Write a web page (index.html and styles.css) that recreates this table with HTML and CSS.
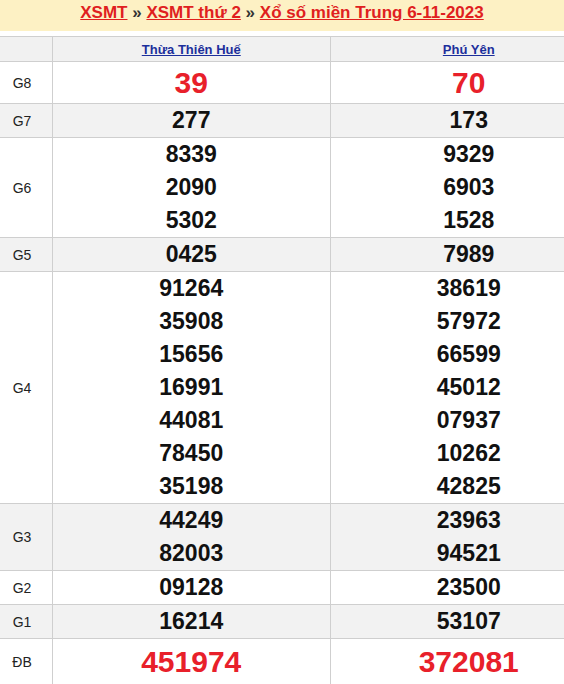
FILE: index.html
```html
<!DOCTYPE html>
<html lang="vi">
<head>
<meta charset="utf-8">
<link rel="stylesheet" href="styles.css">
</head>
<body>
<div class="page">
  <h2 class="title">
    <a href="#">XSMT</a> » <a href="#">XSMT thứ 2</a> » <a href="#">Xổ số miền Trung 6-11-2023</a>
  </h2>
  <table class="kq">
    <thead>
      <tr class="head">
        <th class="lbl"></th>
        <th><a href="#">Thừa Thiên Huế</a></th>
        <th><a href="#">Phú Yên</a></th>
      </tr>
    </thead>
    <tbody>
      <tr class="g8">
        <td class="lbl">G8</td>
        <td><div class="n red big">39</div></td>
        <td><div class="n red big">70</div></td>
      </tr>
      <tr class="alt">
        <td class="lbl">G7</td>
        <td><div class="n">277</div></td>
        <td><div class="n">173</div></td>
      </tr>
      <tr>
        <td class="lbl">G6</td>
        <td><div class="n">8339</div><div class="n">2090</div><div class="n">5302</div></td>
        <td><div class="n">9329</div><div class="n">6903</div><div class="n">1528</div></td>
      </tr>
      <tr class="alt">
        <td class="lbl">G5</td>
        <td><div class="n">0425</div></td>
        <td><div class="n">7989</div></td>
      </tr>
      <tr>
        <td class="lbl">G4</td>
        <td><div class="n">91264</div><div class="n">35908</div><div class="n">15656</div><div class="n">16991</div><div class="n">44081</div><div class="n">78450</div><div class="n">35198</div></td>
        <td><div class="n">38619</div><div class="n">57972</div><div class="n">66599</div><div class="n">45012</div><div class="n">07937</div><div class="n">10262</div><div class="n">42825</div></td>
      </tr>
      <tr class="alt">
        <td class="lbl">G3</td>
        <td><div class="n">44249</div><div class="n">82003</div></td>
        <td><div class="n">23963</div><div class="n">94521</div></td>
      </tr>
      <tr>
        <td class="lbl">G2</td>
        <td><div class="n">09128</div></td>
        <td><div class="n">23500</div></td>
      </tr>
      <tr class="alt">
        <td class="lbl">G1</td>
        <td><div class="n">16214</div></td>
        <td><div class="n">53107</div></td>
      </tr>
      <tr class="db">
        <td class="lbl">ĐB</td>
        <td><div class="n red big">451974</div></td>
        <td><div class="n red big">372081</div></td>
      </tr>
    </tbody>
  </table>
</div>
</body>
</html>
```
FILE: styles.css
```css
html, body {
  margin: 0;
  padding: 0;
  background: #fff;
  font-family: "Liberation Sans", Arial, sans-serif;
  overflow: hidden;
}
.page {
  width: 608px;
}
.title {
  margin: 0 0 5px 0;
  width: 564px;
  height: 31px;
  background: #fdf1c4;
  text-align: center;
  font-size: 17px;
  font-weight: bold;
  line-height: 24px;
  color: #333;
  box-sizing: border-box;
  padding-top: 1px;
}
.title a {
  color: #e0201e;
  text-decoration: underline;
}
.kq {
  border-collapse: collapse;
  width: 617px;
  table-layout: fixed;
  margin-left: -9px;
}
.kq th, .kq td {
  border: 1px solid #cfcfcf;
  padding: 0;
  text-align: center;
  vertical-align: middle;
}
.kq .lbl {
  width: 60px;
  font-size: 14px;
  font-weight: normal;
  color: #222;
}
.head th {
  background: #f1f1f1;
  height: 24px;
  font-size: 13px;
  font-weight: bold;
}
.head th a {
  color: #1c2f9c;
  text-decoration: underline;
}
.alt td {
  background: #f2f2f2;
}
.n {
  font-size: 23px;
  font-weight: bold;
  line-height: 33px;
  height: 33px;
  color: #111;
}
.n.big {
  font-size: 30px;
  line-height: 41px;
  height: 41px;
}
.n.red {
  color: #e8202a;
}
.db .n.big {
  line-height: 46px;
  height: 46px;
}
```
